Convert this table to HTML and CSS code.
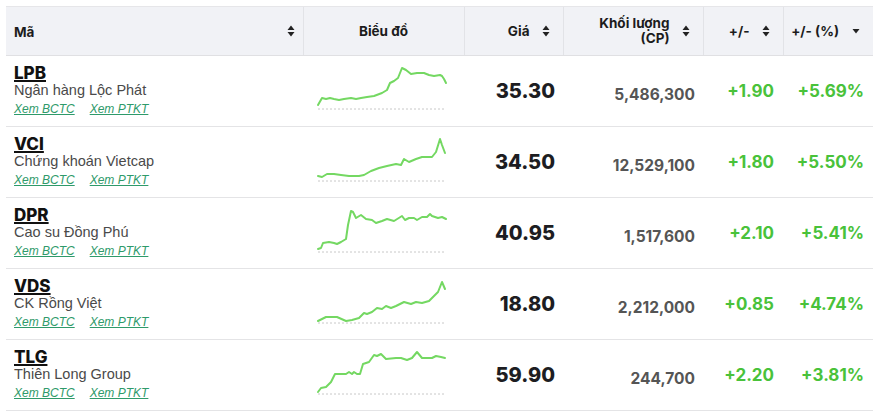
FILE: index.html
```html
<!DOCTYPE html>
<html lang="vi">
<head>
<meta charset="utf-8">
<link rel="stylesheet" href="styles.css">
</head>
<body>
<table class="stocks">
  <colgroup>
    <col class="c-code"><col class="c-chart"><col class="c-price"><col class="c-vol"><col class="c-chg"><col class="c-pct">
  </colgroup>
  <thead>
    <tr>
      <th class="h-code"><span class="hl">Mã</span><svg class="sort" viewBox="0 0 8 12"><path d="M4 0.5L7.5 5H0.5Z M4 11.5L7.5 7H0.5Z"/></svg></th>
      <th class="h-chart">Biểu đồ</th>
      <th class="h-num"><span class="hl">Giá</span><svg class="sort" viewBox="0 0 8 12"><path d="M4 0.5L7.5 5H0.5Z M4 11.5L7.5 7H0.5Z"/></svg></th>
      <th class="h-num"><span class="hl">Khối lượng<br>(CP)</span><svg class="sort" viewBox="0 0 8 12"><path d="M4 0.5L7.5 5H0.5Z M4 11.5L7.5 7H0.5Z"/></svg></th>
      <th class="h-num"><span class="hl">+/-</span><svg class="sort" viewBox="0 0 8 12"><path d="M4 0.5L7.5 5H0.5Z M4 11.5L7.5 7H0.5Z"/></svg></th>
      <th class="h-num"><span class="hl">+/- (%)</span><svg class="sort caret" viewBox="0 0 8 12"><path d="M4 8.5L7.5 4H0.5Z"/></svg></th>
    </tr>
  </thead>
  <tbody>
    <tr>
      <td class="code"><a class="sym">LPB</a><div class="name">Ngân hàng Lộc Phát</div><div class="links"><a>Xem BCTC</a><a>Xem PTKT</a></div></td>
      <td class="chart"><svg class="spark" viewBox="0 0 130 46"><line class="base" x1="1" y1="42" x2="129" y2="42"/><polyline points="1,38 5,31 9,32 13,31 17,32 22,33 27,32 34,31 39,32 44,31 50,30 57,29 65,26 70,23 73,16 77,14 81,11 85,1 89,3 94,7 100,6 107,6 112,8 117,9 123,8 125,9 127,12 129,16"/></svg></td>
      <td class="price">35.30</td>
      <td class="vol"><span class="vt">5,486,300</span></td>
      <td class="chg">+1.90</td>
      <td class="chg">+5.69%</td>
    </tr>
    <tr>
      <td class="code"><a class="sym">VCI</a><div class="name">Chứng khoán Vietcap</div><div class="links"><a>Xem BCTC</a><a>Xem PTKT</a></div></td>
      <td class="chart"><svg class="spark" viewBox="0 0 130 46"><line class="base" x1="1" y1="43" x2="129" y2="43"/><polyline points="1,38 5,39 10,36 17,36 24,37 32,38 42,38 47,37 54,33 62,30 70,28 79,26 84,27 87,21 92,24 99,21 105,19 115,19 119,14 123,1 125,7 128,15"/></svg></td>
      <td class="price">34.50</td>
      <td class="vol"><span class="vt">12,529,100</span></td>
      <td class="chg">+1.80</td>
      <td class="chg">+5.50%</td>
    </tr>
    <tr>
      <td class="code"><a class="sym">DPR</a><div class="name">Cao su Đồng Phú</div><div class="links"><a>Xem BCTC</a><a>Xem PTKT</a></div></td>
      <td class="chart"><svg class="spark" viewBox="0 0 130 46"><line class="base" x1="1" y1="43" x2="129" y2="43"/><polyline points="1,40 4,39 6,34 12,33 17,34 20,35 24,33 29,30 31,16 34,2 36,3 39,9 44,6 49,10 55,11 59,14 65,12 70,10 77,12 85,7 88,11 92,9 97,9 100,11 105,8 110,8 113,5 115,7 121,9 125,8 129,10"/></svg></td>
      <td class="price">40.95</td>
      <td class="vol"><span class="vt">1,517,600</span></td>
      <td class="chg">+2.10</td>
      <td class="chg">+5.41%</td>
    </tr>
    <tr>
      <td class="code"><a class="sym">VDS</a><div class="name">CK Rồng Việt</div><div class="links"><a>Xem BCTC</a><a>Xem PTKT</a></div></td>
      <td class="chart"><svg class="spark" viewBox="0 0 130 46"><line class="base" x1="1" y1="43" x2="129" y2="43"/><polyline points="1,41 9,37 20,37 29,41 35,40 42,38 47,33 50,34 55,32 60,28 65,29 69,26 74,28 79,26 87,22 94,24 99,22 105,23 112,21 117,16 121,12 125,2 128,9"/></svg></td>
      <td class="price">18.80</td>
      <td class="vol"><span class="vt">2,212,000</span></td>
      <td class="chg">+0.85</td>
      <td class="chg">+4.74%</td>
    </tr>
    <tr>
      <td class="code"><a class="sym">TLG</a><div class="name">Thiên Long Group</div><div class="links"><a>Xem BCTC</a><a>Xem PTKT</a></div></td>
      <td class="chart"><svg class="spark" viewBox="0 0 130 46"><line class="base" x1="1" y1="43" x2="129" y2="43"/><polyline points="1,41 4,37 9,36 14,31 18,23 29,23 32,21 35,23 37,21 40,23 43,23 46,13 52,11 57,4 60,5 64,3 69,8 79,7 84,7 90,9 95,7 100,1 105,7 115,7 119,5 124,6 128,7"/></svg></td>
      <td class="price">59.90</td>
      <td class="vol"><span class="vt">244,700</span></td>
      <td class="chg">+2.20</td>
      <td class="chg">+3.81%</td>
    </tr>
  </tbody>
</table>
</body>
</html>
```
FILE: styles.css
```css
html, body {
  margin: 0;
  padding: 0;
  background: #fff;
}
body {
  padding: 6px 0 0 6px;
  font-family: Inter, "Liberation Sans", sans-serif;
  color: #1b1b1b;
}
.stocks {
  border-collapse: collapse;
  table-layout: fixed;
  width: 867px;
}
.c-code { width: 297px; }
.c-chart { width: 161px; }
.c-price { width: 99px; }
.c-vol { width: 140px; }
.c-chg { width: 80px; }
.c-pct { width: 90px; }

thead th {
  background: #f1f2f6;
  height: 48px;
  padding: 0;
  border-top: 1px solid #e6e6e9;
  border-bottom: 1px solid #e0e0e3;
  border-left: 1px solid #e2e3e7;
  font-size: 13.5px;
  font-weight: 700;
  color: #1c1c1c;
  vertical-align: middle;
}
thead th:first-child { border-left: none; }
.h-code {
  text-align: left;
  padding: 0 8px;
}
.h-code .sort { float: right; margin-top: 3px; }
.h-chart { text-align: center; }
.h-num {
  text-align: right;
  padding-right: 13px;
  line-height: 15px;
}
.hl {
  display: inline-block;
  vertical-align: middle;
}
.sort {
  width: 8px;
  height: 12px;
  fill: #222;
  vertical-align: middle;
  margin-left: 12px;
}
.caret { margin-left: 13px; }

tbody td {
  height: 70px;
  padding: 0;
  border-bottom: 1px solid #e4e4e6;
  vertical-align: middle;
  overflow: hidden;
}
.code {
  padding: 0 8px !important;
  vertical-align: top !important;
}
.sym {
  display: block;
  width: fit-content;
  margin-top: 8px;
  font-family: Inter, sans-serif;
  font-size: 17px;
  font-weight: 800;
  color: #111;
  text-decoration: underline;
  text-decoration-thickness: 2px;
  text-underline-offset: 1px;
  line-height: 18px;
}
.name {
  font-family: "Liberation Sans", Arial, sans-serif;
  font-size: 14.5px;
  color: #4a4a4a;
  line-height: 17px;
}
.links {
  display: flex;
  gap: 15px;
  margin-top: 3px;
}
.links a {
  font-family: "Liberation Sans", Arial, sans-serif;
  font-size: 12px;
  font-style: italic;
  color: #2e9a6a;
  text-decoration: underline;
  line-height: 15px;
}
.chart {
  padding-left: 14px !important;
  vertical-align: top !important;
}
.spark {
  display: block;
  width: 130px;
  height: 46px;
  margin-top: 11px;
  overflow: visible;
}
.spark polyline {
  fill: none;
  stroke: #74d862;
  stroke-width: 2;
  stroke-linejoin: round;
  stroke-linecap: round;
}
.spark .base {
  stroke: #c8c8c8;
  stroke-width: 1;
  stroke-dasharray: 2 2;
}
.price {
  text-align: right;
  padding-right: 8px !important;
  font-size: 20px;
  font-weight: 800;
  color: #1d1d22;
}
.vol {
  text-align: right;
  padding-right: 8px !important;
  font-size: 15.5px;
  font-weight: 700;
  color: #555;
}
.vt {
  display: inline-block;
  transform: translateY(3px);
}
.chg {
  text-align: right;
  padding-right: 9px !important;
  font-size: 17px;
  font-weight: 700;
  color: #49c23a;
}
```
